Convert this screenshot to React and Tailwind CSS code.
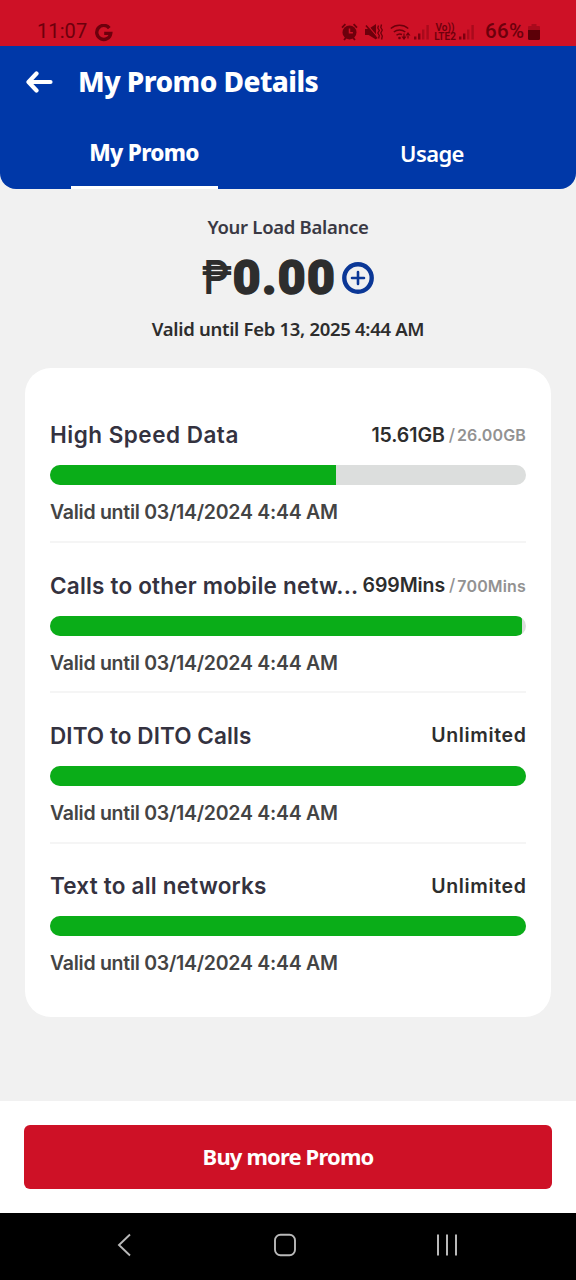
import { clsx } from 'clsx';

const promos = [
  { name: 'High Speed Data', tracking: 'tracking-[0.5px]', left: '15.61GB', total: '26.00GB', percent: 60.1, valid: '03/14/2024 4:44 AM' },
  { name: 'Calls to other mobile netw...', tracking: 'tracking-[0.2px]', left: '699Mins', total: '700Mins', percent: 99.2, valid: '03/14/2024 4:44 AM' },
  { name: 'DITO to DITO Calls', tracking: 'tracking-[0.08px]', percent: 100, valid: '03/14/2024 4:44 AM' },
  { name: 'Text to all networks', tracking: 'tracking-[0.22px]', percent: 100, valid: '03/14/2024 4:44 AM' },
];

const SignalIcon = ({ className }) => (
  <svg className={className} width="16" height="16" viewBox="0 0 16 16">
    <rect x="0" y="12.5" width="2.4" height="3" fill="#7d0010" />
    <rect x="4" y="9.5" width="2.4" height="6" fill="#7d0010" />
    <rect x="8" y="5.5" width="2.4" height="10" fill="#a90a1c" />
    <rect x="12.4" y="1" width="2.4" height="14.5" fill="#a90a1c" />
  </svg>
);

const StatusBar = () => (
  <div className="flex h-[46px] bg-[#ce1126] pt-[20px] font-['Roboto',sans-serif] text-[#6d000c]">
    <span className="ml-[37px] w-[58px] text-[20px] leading-[23px] tracking-[0.1px]">11:07</span>
    <svg className="mt-[4px]" width="18" height="18" viewBox="0 0 18 18">
      <path d="M14.3 4.1A7 7 0 1 0 15.7 9.4H9.2" fill="none" stroke="currentColor" strokeWidth="3.4" />
    </svg>

    <svg className="mt-[3px] ml-[228px]" width="17" height="18" viewBox="0 0 17 18">
      <path d="M1 4.6 4.4 1.2M16 4.6 12.6 1.2M3 17l2-2.4M14 17l-2-2.4" stroke="currentColor" strokeWidth="1.8" />
      <circle cx="8.5" cy="9.4" r="7" fill="currentColor" />
      <path d="M8.5 5.6v4.2h3.4" fill="none" stroke="#ce1126" strokeWidth="1.5" />
    </svg>
    <svg className="mt-[3px] ml-[7px]" width="18" height="18" viewBox="0 0 18 18">
      <path d="M0 6h3.6L11 1v15.6L3.6 12H0z" fill="currentColor" />
      <path d="M2.2 1.8 13 14.6" stroke="#ce1126" strokeWidth="1.3" />
      <path d="M1 2.5 12 15.5" stroke="currentColor" strokeWidth="1.6" />
      <path d="M13.5 2.5 12.8 5l1.5 2.5-1.5 2.5 1.5 2.5-.7 3M16.5 1.5l-.7 3 1.5 2.5-1.5 3 1.5 3-.7 3.5" fill="none" stroke="currentColor" strokeWidth="1.3" />
    </svg>
    <svg className="mt-[3px] ml-[7px]" width="23" height="18" viewBox="0 0 23 18">
      <g fill="none" stroke="currentColor" strokeWidth="1.5">
        <path d="M.8 5.5a13.5 13.5 0 0 1 17.5 0" />
        <path d="M3.8 9a9 9 0 0 1 11.500 0" />
        <path d="M6.5 12.3a5 5 0 0 1 5.5-.8" />
      </g>
      <circle cx="9.5" cy="15" r="1.3" fill="currentColor" />
      <path d="M11.5 13.5h5L14 17zM15.5 12.5h5L18 9zM13.4 10.5h1.2v4h-1.2zM17.4 12h1.2v3.5h-1.2z" fill="currentColor" />
    </svg>
    <SignalIcon className="mt-[4px] ml-[1px]" />
    <div className="mt-[3px] ml-[3px] flex w-[24px] flex-col items-center text-[10px] leading-[9px] font-semibold">
      <span>Vo))</span>
      <span>LTE2</span>
    </div>
    <SignalIcon className="mt-[4px] ml-[2px]" />
    <span className="ml-[10px] w-[43px] text-[20.5px] leading-[23px] font-medium tracking-[0.4px]">66%</span>
    <svg className="mt-[4px] shrink-0" width="12" height="17" viewBox="0 0 12 17">
      <path d="M3.5 0h5v2H11q1 0 1 1v4H0V3q0-1 1-1h2.5z" fill="#a90a1c" />
      <path d="M0 6h12v8.5q0 1.5-1.5 1.5h-9Q0 16 0 14.5z" fill="#5c0008" />
    </svg>
  </div>
);

const Header = () => (
  <header className="h-[143px] overflow-hidden bg-[#0038a8] font-['Noto_Sans',sans-serif] text-white">
    <div className="flex h-[71px] items-center">
      <svg className="ml-[26px]" width="27" height="22" viewBox="0 0 27 22">
        <path d="M10.5 2.5 2.5 11l8 8.5M3 11h21.5" fill="none" stroke="currentColor" strokeWidth="4.2" strokeLinecap="round" strokeLinejoin="round" />
      </svg>
      <h1 className="mb-[2px] ml-[25px] text-[28px] font-extrabold tracking-[-0.55px]">My Promo Details</h1>
    </div>
    <div className="grid h-[72px] grid-cols-2">
      <div className="flex flex-col items-center justify-between">
        <span className="pt-[18px] text-[22.5px] leading-[36px] font-extrabold tracking-[-0.7px]">My Promo</span>
        <span className="h-[3px] w-[147px] bg-white" />
      </div>
      <span className="pt-[18px] text-center text-[22px] leading-[36px] font-semibold tracking-[-0.6px]">Usage</span>
    </div>
  </header>
);

const Balance = () => (
  <section className="flex h-[179px] flex-col items-center pt-[23px] font-['Noto_Sans',sans-serif] text-[#2d2d2d]">
    <p className="text-[18.5px] leading-[30px] font-semibold tracking-[-0.3px] text-[#3a3944]">Your Load Balance</p>
    <div className="flex h-[60px] items-center pt-[12px] font-['Roboto',sans-serif] text-[48px] leading-[48px]">
      <span className="w-[31px] origin-left scale-x-[0.84] font-medium">₱</span>
      <span className="font-black tracking-[1.4px] [-webkit-text-stroke:1.5px_#2d2d2d]">0.00</span>
      <svg className="ml-[6px]" width="32" height="32" viewBox="0 0 32 32" fill="none" stroke="#0b3796">
        <circle cx="16" cy="16" r="13.7" strokeWidth="4.4" />
        <path d="M16 10v12M10 16h12" strokeWidth="2.6" strokeLinecap="round" />
      </svg>
    </div>
    <p className="mt-[12px] text-[18.5px] leading-[30px] font-semibold tracking-[-0.3px]">Valid until Feb 13, 2025 4:44 AM</p>
  </section>
);

const PromoRow = ({ promo, last }) => (
  <div className={clsx('h-[150.3px] pt-[26.5px]', !last && 'border-b-2 border-[#f5f5f5]')}>
    <div className="flex h-8 items-center justify-between whitespace-nowrap text-[#2d2d2d]">
      <h2 className={clsx('text-[22.5px] leading-8 font-semibold text-[#34323f]', promo.tracking)}>{promo.name}</h2>
      {promo.total ? (
        <div className="flex items-center">
          <span className="text-[19.5px] font-semibold tracking-[-0.1px]">{promo.left}</span>
          <span className="ml-[4px] text-[17px] font-medium text-[#929292]">/</span>
          <span className="ml-[2px] text-[16px] font-semibold tracking-[0.15px] text-[#929292]">{promo.total}</span>
        </div>
      ) : (
        <span className="-mr-[0.6px] text-[19.5px] font-semibold tracking-[0.65px]">Unlimited</span>
      )}
    </div>
    <div className="mt-[14px] h-[20px] overflow-hidden rounded-full bg-[#dcdedd]">
      <div className={clsx('h-full bg-[#0aad18]', promo.percent > 90 && 'rounded-r-[4px]')} style={{ width: `${promo.percent}%` }} />
    </div>
    <p className="mt-[12px] text-[19.5px] leading-[30px] font-semibold tracking-[-0.27px] text-[#444]">Valid until {promo.valid}</p>
  </div>
);

const NavBar = () => (
  <nav className="h-[67px] bg-black pt-[20px] text-[#b9b9b9]">
    <div className="flex">
      <svg className="ml-[117px]" width="15" height="24" viewBox="0 0 15 24">
        <path d="M13 1.5 2 12l11 10.5" fill="none" stroke="currentColor" strokeWidth="1.9" />
      </svg>
      <svg className="ml-[142px]" width="22" height="24" viewBox="0 0 22 24">
        <rect x="1" y="1.8" width="20" height="20.4" rx="5.5" fill="none" stroke="currentColor" strokeWidth="1.9" />
      </svg>
      <svg className="ml-[140px]" width="22" height="24" viewBox="0 0 22 24">
        <path d="M2 1.5v21M11 1.5v21M20 1.5v21" stroke="currentColor" strokeWidth="2" />
      </svg>
    </div>
  </nav>
);

export default function App() {
  return (
    <div className="flex h-[1280px] w-[576px] flex-col overflow-hidden bg-[#f1f1f1]">
      <StatusBar />
      <div className="overflow-hidden rounded-b-[16px]">
        <Header />
      </div>
      <Balance />
      <main className="mx-[25px] h-[649px] rounded-[26px] bg-white px-[25px] pt-[24.8px] font-['Inter',sans-serif]">
        {promos.map((promo, i) => (
          <PromoRow key={promo.name} promo={promo} last={i === promos.length - 1} />
        ))}
      </main>
      <footer className="mt-auto">
        <div className="h-[112px] bg-white px-[24px] pt-[24px]">
          <button className="h-[64px] w-full rounded-[6px] bg-[#ce1126] pb-[2px] font-['Noto_Sans',sans-serif] text-[22px] font-bold tracking-[-0.85px] text-white">
            Buy more Promo
          </button>
        </div>
        <NavBar />
      </footer>
    </div>
  );
}
